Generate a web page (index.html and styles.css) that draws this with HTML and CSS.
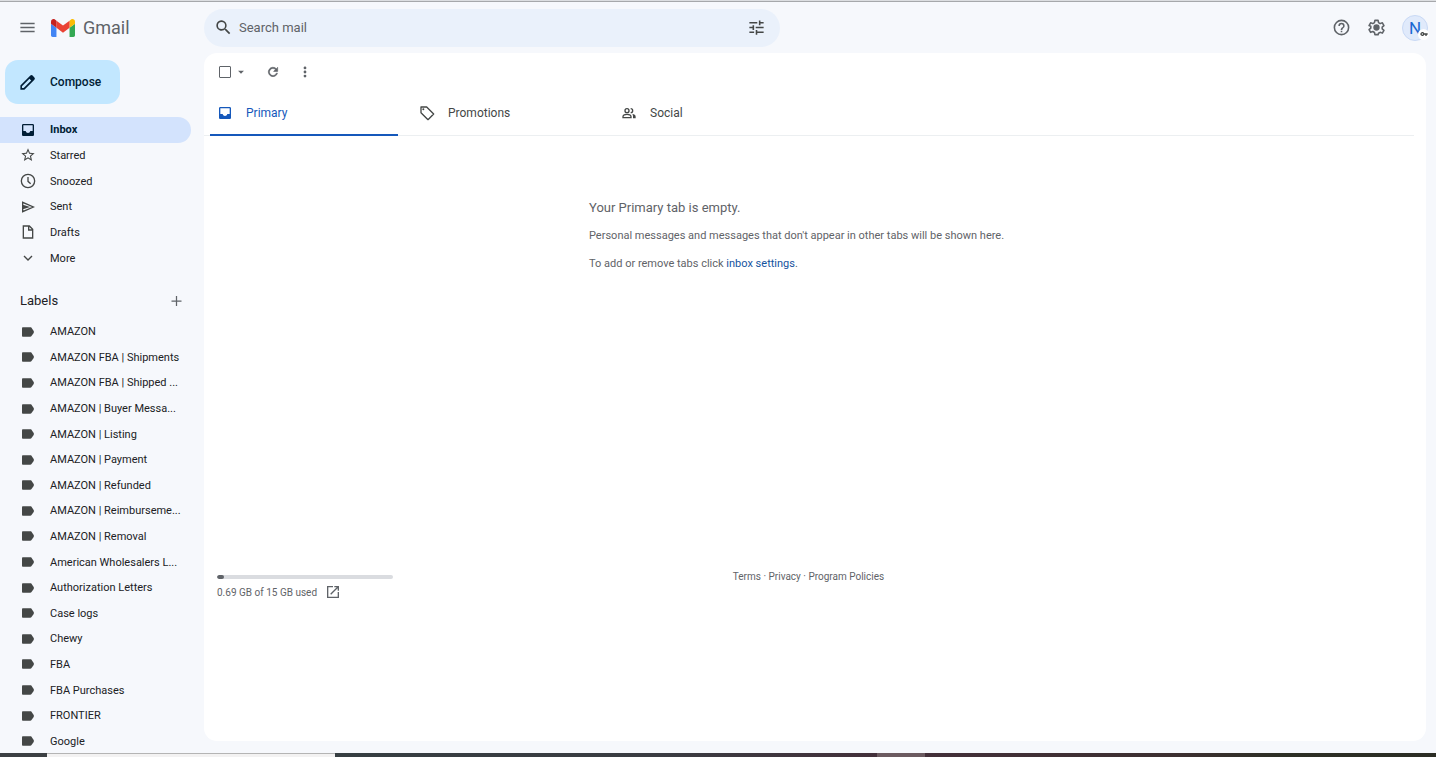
FILE: index.html
```html
<!DOCTYPE html>
<html lang="en">
<head>
  <meta charset="utf-8">
  <title>Inbox - Gmail</title>
  <link rel="stylesheet" href="styles.css">
</head>
<body>
  <!-- shared icon shapes -->
  <svg class="sprite" aria-hidden="true">
    <symbol id="i-label" viewBox="0 0 24 24"><path d="M17 5.400C16.600 5.100 16 5 15.500 5H4.500C3.700 5 3 5.700 3 6.500v11c0 .8.700 1.500 1.500 1.500h11c.6 0 1.100-.1 1.500-.500l3.500-5c.5-.8.5-2.200 0-3z"/></symbol>
    <symbol id="i-inbox" viewBox="0 0 24 24"><path d="M19 3H5c-1.100 0-2 .9-2 2v14c0 1.100.9 2 2 2h14c1.100 0 2-.9 2-2V5c0-1.100-.9-2-2-2zm0 10.500h-3.500c-.5 1.800-1.800 3-3.500 3s-3-1.200-3.500-3H5V5h14z"/></symbol>
  </svg>

  <div class="window-top"></div>

  <div class="app">
    <header class="header">
      <div class="brand">
        <button class="icon-button" aria-label="Main menu">
          <svg class="icon menu-icon" viewBox="0 0 24 24"><path d="M3 18h18v-2H3zm0-5h18v-2H3zm0-7v2h18V6z"/></svg>
        </button>
        <a class="logo" href="#">
          <svg class="logo-mark" viewBox="52 42 88 66">
            <path fill="#4285f4" d="M58 108h14V74L52 59v43c0 3.300 2.700 6 6 6"/>
            <path fill="#34a853" d="M120 108h14c3.300 0 6-2.700 6-6V59l-20 15"/>
            <path fill="#fbbc04" d="M120 48v26l20-15v-8c0-7.400-8.500-11.600-14.400-7.200"/>
            <path fill="#ea4335" d="M72 74V48l24 18 24-18v26L96 92"/>
            <path fill="#c5221f" d="M52 51v8l20 15V48l-5.600-4.200C60.500 39.400 52 43.600 52 51"/>
          </svg>
          <span class="logo-text">Gmail</span>
        </a>
      </div>

      <form class="search">
        <button type="button" class="icon-button" aria-label="Search">
          <svg class="icon search-icon" viewBox="0 0 24 24"><path d="M15.500 14h-.8l-.3-.3A6.500 6.500 0 1 0 13.700 14.400l.3.300v.8l5 5 1.500-1.500zm-6 0a4.500 4.500 0 1 1 0-9 4.500 4.500 0 0 1 0 9z"/></svg>
        </button>
        <input type="text" placeholder="Search mail" aria-label="Search mail">
        <button type="button" class="icon-button" aria-label="Show search options">
          <svg class="icon tune-icon" viewBox="0 0 24 24"><path d="M3 17v2h6v-2zM3 5v2h10V5zm10 16v-2h8v-2h-8v-2h-2v6zM7 9v2H3v2h4v2h2V9zm14 4v-2H11v2zm-6-4h2V7h4V5h-4V3h-2z"/></svg>
        </button>
      </form>

      <div class="header-actions">
        <button class="icon-button" aria-label="Support">
          <svg class="icon" viewBox="0 0 24 24"><path d="M11 18h2v-2h-2zm1-16a10 10 0 1 0 0 20 10 10 0 0 0 0-20zm0 18a8 8 0 1 1 0-16 8 8 0 0 1 0 16zm0-14a4 4 0 0 0-4 4h2a2 2 0 1 1 4 0c0 2-3 1.800-3 5h2c0-2.200 3-2.500 3-5a4 4 0 0 0-4-4z"/></svg>
        </button>
        <button class="icon-button" aria-label="Settings">
          <svg class="icon" viewBox="0 0 24 24"><path fill="none" stroke="currentColor" stroke-width="2" stroke-linejoin="round" d="M10 3h4l.6 2.900 2 1.200 2.800-1 2 3.500-2.200 1.900v2.200l2.200 1.900-2 3.500-2.800-1-2 1.200L14 21h-4l-.6-2.700-2-1.200-2.800 1-2-3.500 2.200-1.900v-2.200L2.600 9.600l2-3.500 2.800 1 2-1.200z"/><circle cx="12" cy="12" r="4"/></svg>
        </button>
        <button class="avatar" aria-label="Account">N
          <span class="avatar-badge">
            <svg viewBox="0 0 24 24"><path d="M12.700 10A6 6 0 1 0 12.700 14H16v4h4v-4h3v-4zM7 14a2 2 0 1 1 0-4 2 2 0 0 1 0 4z"/></svg>
          </span>
        </button>
      </div>
    </header>

    <aside class="sidebar">
      <button class="compose">
        <svg class="icon" viewBox="0 0 24 24"><path d="M20.700 5.600l-2.300-2.300a2 2 0 0 0-2.800 0L3 15.900V21h5.100L20.700 8.400a2 2 0 0 0 0-2.800zM7.200 19H5v-2.200L14.500 7.300l2.200 2.200z"/></svg>
        Compose
      </button>

      <nav class="folders">
        <a class="nav-item active" href="#"><svg class="nav-icon"><use href="#i-inbox"/></svg><span>Inbox</span></a>
        <a class="nav-item" href="#"><svg class="nav-icon" viewBox="0 0 24 24"><path d="M22 9.200l-7.200-.6L12 2 9.200 8.600 2 9.200l5.500 4.700L5.800 21l6.200-3.700 6.200 3.700-1.600-7.100zM12 15.400l-3.800 2.300 1-4.300-3.300-2.900 4.400-.4L12 6.100l1.700 4 4.400.4-3.300 2.900 1 4.300z"/></svg><span>Starred</span></a>
        <a class="nav-item" href="#"><svg class="nav-icon" viewBox="0 0 24 24"><path fill="none" stroke="currentColor" stroke-width="2" d="M12 2a10 10 0 1 0 0 20 10 10 0 0 0 0-20zm0 4v6.500l4 3.500"/></svg><span>Snoozed</span></a>
        <a class="nav-item" href="#"><svg class="nav-icon" viewBox="0 0 24 24"><path fill="none" stroke="currentColor" stroke-width="2" d="M4 5v14l16-7zM4 12h8M4 9.500l8 2.500-8 2.500"/></svg><span>Sent</span></a>
        <a class="nav-item" href="#"><svg class="nav-icon" viewBox="0 0 24 24"><path fill="none" stroke="currentColor" stroke-width="2" d="M5 3h9l5 5v13H5zM13 3v6h6"/></svg><span>Drafts</span></a>
        <a class="nav-item" href="#"><svg class="nav-icon" viewBox="0 0 24 24"><path fill="none" stroke="currentColor" stroke-width="2" d="M6 9l6 6 6-6"/></svg><span>More</span></a>
      </nav>

      <div class="labels-header">
        <h2>Labels</h2>
        <button class="icon-button" aria-label="Create new label">
          <svg class="icon" viewBox="0 0 24 24"><path d="M20 13h-7v7h-2v-7H4v-2h7V4h2v7h7z"/></svg>
        </button>
      </div>

      <nav class="labels">
        <a class="nav-item" href="#"><svg class="nav-icon"><use href="#i-label"/></svg><span>AMAZON</span></a>
        <a class="nav-item" href="#"><svg class="nav-icon"><use href="#i-label"/></svg><span>AMAZON FBA | Shipments</span></a>
        <a class="nav-item" href="#"><svg class="nav-icon"><use href="#i-label"/></svg><span>AMAZON FBA | Shipped ...</span></a>
        <a class="nav-item" href="#"><svg class="nav-icon"><use href="#i-label"/></svg><span>AMAZON | Buyer Messa...</span></a>
        <a class="nav-item" href="#"><svg class="nav-icon"><use href="#i-label"/></svg><span>AMAZON | Listing</span></a>
        <a class="nav-item" href="#"><svg class="nav-icon"><use href="#i-label"/></svg><span>AMAZON | Payment</span></a>
        <a class="nav-item" href="#"><svg class="nav-icon"><use href="#i-label"/></svg><span>AMAZON | Refunded</span></a>
        <a class="nav-item" href="#"><svg class="nav-icon"><use href="#i-label"/></svg><span>AMAZON | Reimburseme...</span></a>
        <a class="nav-item" href="#"><svg class="nav-icon"><use href="#i-label"/></svg><span>AMAZON | Removal</span></a>
        <a class="nav-item" href="#"><svg class="nav-icon"><use href="#i-label"/></svg><span>American Wholesalers L...</span></a>
        <a class="nav-item" href="#"><svg class="nav-icon"><use href="#i-label"/></svg><span>Authorization Letters</span></a>
        <a class="nav-item" href="#"><svg class="nav-icon"><use href="#i-label"/></svg><span>Case logs</span></a>
        <a class="nav-item" href="#"><svg class="nav-icon"><use href="#i-label"/></svg><span>Chewy</span></a>
        <a class="nav-item" href="#"><svg class="nav-icon"><use href="#i-label"/></svg><span>FBA</span></a>
        <a class="nav-item" href="#"><svg class="nav-icon"><use href="#i-label"/></svg><span>FBA Purchases</span></a>
        <a class="nav-item" href="#"><svg class="nav-icon"><use href="#i-label"/></svg><span>FRONTIER</span></a>
        <a class="nav-item" href="#"><svg class="nav-icon"><use href="#i-label"/></svg><span>Google</span></a>
      </nav>
    </aside>

    <main class="panel">
      <div class="toolbar">
        <input type="checkbox" class="select-all" aria-label="Select all">
        <button class="icon-button" aria-label="Select options">
          <svg class="icon caret-icon" viewBox="0 0 24 24"><path d="M7 10l5 5 5-5z"/></svg>
        </button>
        <button class="icon-button refresh" aria-label="Refresh">
          <svg class="icon small-icon" viewBox="0 0 24 24"><path stroke="currentColor" d="M17.700 6.300A8 8 0 1 0 19.700 14h-2.100A6 6 0 1 1 16.200 7.800L13 11h7V4z"/></svg>
        </button>
        <button class="icon-button" aria-label="More options">
          <svg class="icon small-icon" viewBox="0 0 24 24"><circle cx="12" cy="5" r="2.400"/><circle cx="12" cy="12" r="2.400"/><circle cx="12" cy="19" r="2.400"/></svg>
        </button>
      </div>

      <div class="tabs">
        <button class="tab active"><svg class="nav-icon"><use href="#i-inbox"/></svg>Primary</button>
        <button class="tab"><svg class="nav-icon" viewBox="0 0 24 24"><path fill="none" stroke="currentColor" stroke-width="2" stroke-linejoin="round" d="M3 3h8.500L22 13.500 13.500 22 3 11.500z"/><circle cx="6.500" cy="6.500" r="1.500"/></svg>Promotions</button>
        <button class="tab"><svg class="nav-icon" viewBox="0 0 24 24"><g fill="none" stroke="currentColor" stroke-width="2"><circle cx="9" cy="8.500" r="3"/><path d="M3 19v-1.500c0-4.500 12-4.500 12 0V19zM14.500 5.500a3 3 0 0 1 0 6"/></g><path d="M16.700 13.100c3.300.5 5.300 2 5.300 4.400V20h-4v-2.500c0-1.900-.3-3.300-1.300-4.400z"/></svg>Social</button>
      </div>

      <section class="empty">
        <div class="empty-text">
          <h1>Your Primary tab is empty.</h1>
          <p>Personal messages and messages that don't appear in other tabs will be shown here.</p>
          <p>To add or remove tabs click <a href="#">inbox settings</a>.</p>
        </div>
      </section>

      <footer class="footer">
        <div class="storage">
          <div class="storage-bar"><div class="storage-used"></div></div>
          <a href="#">0.69 GB of 15 GB used
            <svg viewBox="0 0 24 24"><path d="M19 19H5V5h7V3H3v18h18v-9h-2zM14 3v2h3.600l-9.800 9.800 1.400 1.400L19 6.400V10h2V3z"/></svg>
          </a>
        </div>
        <div class="legal"><a href="#">Terms</a> · <a href="#">Privacy</a> · <a href="#">Program Policies</a></div>
      </footer>
    </main>
  </div>

  <div class="taskbar">
    <div class="task-start"></div>
    <div class="task-search"></div>
    <div class="task-apps"></div>
    <div class="task-current"></div>
    <div class="task-tray"></div>
  </div>
</body>
</html>
```
FILE: styles.css
```css
* {
  margin: 0;
  padding: 0;
  box-sizing: border-box;
}

body {
  font-family: Roboto, Arial, sans-serif;
  font-size: 11px;
  height: 100vh;
  display: flex;
  flex-direction: column;
  overflow: hidden;
  background: #f6f8fc;
  color: #202124;
}

a {
  color: inherit;
  text-decoration: none;
}

button {
  font: inherit;
  color: inherit;
  background: none;
  border: none;
  cursor: pointer;
}

svg {
  fill: currentColor;
  flex-shrink: 0;
}

.sprite {
  display: none;
}

.icon-button {
  display: flex;
  align-items: center;
  justify-content: center;
  color: #5f6368;
}

.icon {
  width: 19px;
  height: 19px;
}

.window-top {
  flex: none;
  height: 2px;
  background: #dcdee1;
  border-bottom: 1px solid #a6a8ab;
}

.app {
  flex: 1;
  min-height: 0;
  display: grid;
  grid-template-columns: 204px 1fr;
  grid-template-rows: 51px 1fr;
  overflow: hidden;
}

/* Header */
.header {
  grid-column: 1 / -1;
  display: flex;
  align-items: center;
}

.brand {
  width: 204px;
  padding-left: 18px;
  display: flex;
  align-items: center;
  gap: 14px;
}

.logo {
  display: flex;
  align-items: center;
  gap: 8px;
}

.logo-mark {
  width: 24px;
  height: 18px;
}

.logo-text {
  font-size: 18px;
  color: #5f6368;
}

.search {
  flex: 0 1 576px;
  height: 38px;
  padding: 0 14px 0 10px;
  display: flex;
  align-items: center;
  gap: 6px;
  background: #eaf1fb;
  border-radius: 19px;
}

.search .icon-button {
  color: #444746;
}

.search input {
  flex: 1;
  min-width: 0;
  border: none;
  outline: none;
  background: none;
  font: inherit;
  font-size: 13px;
}

.search input::placeholder {
  color: #5f6368;
  opacity: 1;
}

.header-actions {
  margin-left: auto;
  padding-right: 8px;
  display: flex;
  align-items: center;
  gap: 16px;
}

.avatar {
  position: relative;
  width: 26px;
  height: 26px;
  border: 1px solid #c9d9f5;
  border-radius: 50%;
  background: #e0eafb;
  color: #1967d2;
  font-size: 17px;
  line-height: 24px;
}

.avatar-badge {
  position: absolute;
  right: -2px;
  bottom: 0;
  width: 11px;
  height: 11px;
  display: flex;
  align-items: center;
  justify-content: center;
  border-radius: 50%;
  background: #fff;
  color: #444746;
}

.avatar-badge svg {
  width: 8px;
  height: 8px;
}

/* Sidebar */
.sidebar {
  padding-top: 7px;
}

.compose {
  height: 44px;
  margin-left: 5px;
  width: 115px;
  padding-left: 13px;
  display: flex;
  align-items: center;
  gap: 13px;
  border-radius: 13px;
  background: #c2e7ff;
  color: #001d35;
  font-size: 12px;
  font-weight: 500;
}

.folders,
.labels {
  display: grid;
  grid-auto-rows: 1fr;
}

.folders {
  height: 154px;
  margin-top: 13px;
}

.labels {
  height: 435px;
}

.nav-item {
  margin-right: 13px;
  padding-left: 20px;
  display: flex;
  align-items: center;
  gap: 14px;
  border-radius: 0 13px 13px 0;
  white-space: nowrap;
}

.nav-icon {
  width: 16px;
  height: 16px;
  color: #444746;
}

.nav-item.active {
  background: #d3e3fd;
  color: #001d35;
  font-weight: 700;
}

.active .nav-icon {
  color: inherit;
}

.labels-header {
  height: 48px;
  padding: 20px 20px 0 20px;
  display: flex;
  align-items: flex-start;
  justify-content: space-between;
}

.labels-header h2 {
  font-size: 13px;
  line-height: 20px;
  font-weight: 400;
}

.labels-header .icon {
  width: 15px;
  height: 20px;
}

/* Mail panel */
.panel {
  margin: 0 10px 13px 0;
  border-radius: 13px;
  background: #fff;
  display: flex;
  flex-direction: column;
  overflow: hidden;
}

.toolbar {
  height: 38px;
  padding-left: 15px;
  display: flex;
  align-items: center;
}

.select-all {
  appearance: none;
  width: 12px;
  height: 12px;
  border: 1px solid #5f6368;
  border-radius: 1px;
}

.caret-icon {
  width: 14px;
  height: 14px;
}

.select-all + .icon-button {
  margin-left: 3px;
}

.small-icon {
  width: 14px;
  height: 14px;
}

.refresh {
  margin: 0 18px;
}

.tabs {
  height: 45px;
  margin-right: 12px;
  padding-left: 6px;
  display: flex;
  gap: 14px;
  border-bottom: 1px solid #eceff1;
}

.tab {
  width: 188px;
  height: 45px;
  padding-left: 7px;
  display: flex;
  align-items: center;
  gap: 13px;
  color: #444746;
  font-size: 12px;
  border-bottom: 2px solid transparent;
}

.tab.active {
  color: #1558bb;
  border-color: #1558bb;
}

.empty {
  flex: 0 0 439px;
  padding: 62px 28px 0 0;
  display: flex;
  justify-content: center;
  align-items: flex-start;
  color: #5f6368;
}

.empty-text {
  width: 424px;
}

.empty h1 {
  font-size: 13px;
  line-height: 20px;
  font-weight: 400;
}

.empty p {
  margin-top: 8px;
  line-height: 20px;
}

.empty a {
  color: #15539e;
}

.footer {
  margin-right: 26px;
  padding-left: 13px;
  display: grid;
  grid-template-columns: 1fr auto 1fr;
  font-size: 10px;
  color: #5f6368;
}

.storage-bar {
  width: 176px;
  height: 4px;
  border-radius: 2px;
  background: #dadce0;
  overflow: hidden;
}

.storage-used {
  width: 4%;
  height: 100%;
  border-radius: 2px;
  background: #5f6368;
}

.storage a {
  margin-top: 5px;
  display: flex;
  align-items: center;
  gap: 8px;
}

.storage svg {
  width: 16px;
  height: 16px;
}

.legal {
  line-height: 4px;
}

/* Desktop edge under the window */
.taskbar {
  flex: none;
  height: 4px;
  display: flex;
}

.task-start {
  width: 47px;
  background: #3c4043;
}

.task-search {
  width: 288px;
  background: #f3f2f2;
  border-top: 1px solid #b4b4b4;
}

.task-apps {
  flex: 542;
  background: linear-gradient(90deg, #363e42, #3a3c42 60%, #43303a);
}

.task-current {
  width: 48px;
  background: #6b5a60;
}

.task-tray {
  flex: 511;
  background: linear-gradient(90deg, #432f39, #3c2f30 50%, #2d2f25 70%, #2b2d24);
}
```
